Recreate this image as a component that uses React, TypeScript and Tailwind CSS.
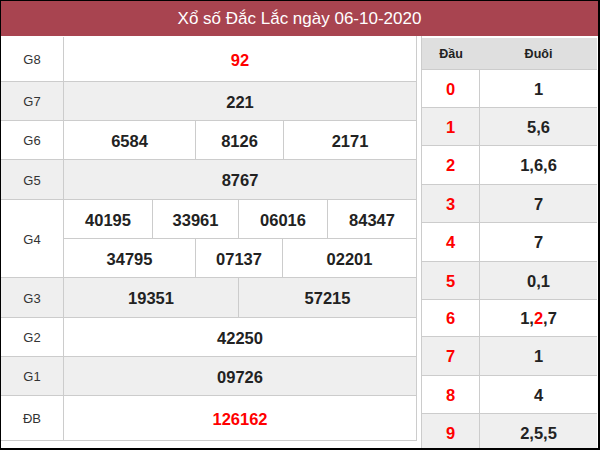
import React from "react";

const F = { fontFamily: '"Liberation Sans", Arial, sans-serif' };

function Label({ children }: { children: React.ReactNode }) {
  return (
    <div className="w-[63px] shrink-0 flex items-center justify-center pt-[2px] border-r border-[#cccccc] text-[13px] text-[#333333]">
      {children}
    </div>
  );
}

function Cell({ w, children, red, last }: { w?: string; children: React.ReactNode; red?: boolean; last?: boolean }) {
  return (
    <div
      className={`${w ?? "flex-1"} flex items-center justify-center pt-[2px] font-bold text-[16.5px] ${red ? "text-[#ff0000]" : "text-[#222222]"} ${last ? "" : "border-r border-[#cccccc]"}`}
    >
      {children}
    </div>
  );
}

export default function App() {
  const right: [string, React.ReactNode, string][] = [
    ["0", "1", "h-[38px] bg-white"],
    ["1", "5,6", "h-[38px] bg-[#efefef]"],
    ["2", "1,6,6", "h-[39px] bg-white"],
    ["3", "7", "h-[38px] bg-[#efefef]"],
    ["4", "7", "h-[39px] bg-white"],
    ["5", "0,1", "h-[38px] bg-[#efefef]"],
    [
      "6",
      <span>
        1,<span className="text-[#ff0000]">2</span>,7
      </span>,
      "h-[37px] bg-white",
    ],
    ["7", "1", "h-[39px] bg-[#efefef]"],
    ["8", "4", "h-[38px] bg-white"],
    ["9", "2,5,5", "h-[38px] bg-[#efefef]"],
  ];

  return (
    <div style={F} className="w-[600px] h-[450px] overflow-hidden bg-white border-l border-t border-r-2 border-b-2 border-black flex flex-col">
      <div className="h-[35px] shrink-0 bg-[#a84450] flex items-center justify-center text-white text-[17px]">
        Xổ số Đắc Lắc ngày 06-10-2020
      </div>
      <div className="flex flex-1 min-h-0">
        {/* Left table */}
        <div className="w-[416px] shrink-0 flex flex-col pt-[1px] border-r border-[#cccccc] self-start">
          <div className="h-[45px] flex border-b border-[#cccccc] bg-white">
            <Label>G8</Label>
            <Cell red last>92</Cell>
          </div>
          <div className="h-[39px] flex border-b border-[#cccccc] bg-[#efefef]">
            <Label>G7</Label>
            <Cell last>221</Cell>
          </div>
          <div className="h-[39px] flex border-b border-[#cccccc] bg-white">
            <Label>G6</Label>
            <Cell w="w-[132px]">6584</Cell>
            <Cell w="w-[88px]">8126</Cell>
            <Cell last>2171</Cell>
          </div>
          <div className="h-[40px] flex border-b border-[#cccccc] bg-[#efefef]">
            <Label>G5</Label>
            <Cell last>8767</Cell>
          </div>
          <div className="h-[78px] flex border-b border-[#cccccc] bg-white">
            <Label>G4</Label>
            <div className="flex-1 flex flex-col">
              <div className="h-[39px] flex border-b border-[#cccccc]">
                <Cell w="w-[89px]">40195</Cell>
                <Cell w="w-[86px]">33961</Cell>
                <Cell w="w-[89px]">06016</Cell>
                <Cell last>84347</Cell>
              </div>
              <div className="flex-1 flex">
                <Cell w="w-[132px]">34795</Cell>
                <Cell w="w-[87px]">07137</Cell>
                <Cell last>02201</Cell>
              </div>
            </div>
          </div>
          <div className="h-[40px] flex border-b border-[#cccccc] bg-[#efefef]">
            <Label>G3</Label>
            <Cell w="w-[175px]">19351</Cell>
            <Cell last>57215</Cell>
          </div>
          <div className="h-[39px] flex border-b border-[#cccccc] bg-white">
            <Label>G2</Label>
            <Cell last>42250</Cell>
          </div>
          <div className="h-[39px] flex border-b border-[#cccccc] bg-[#efefef]">
            <Label>G1</Label>
            <Cell last>09726</Cell>
          </div>
          <div className="h-[45px] flex border-b border-[#cccccc] bg-white">
            <Label>ĐB</Label>
            <Cell red last>126162</Cell>
          </div>
        </div>

        {/* Right table */}
        <div className="ml-[4px] w-[176px] shrink-0 flex flex-col pt-[2px] self-start border-l border-[#cccccc]">
          <div className="h-[32px] flex bg-[#dfdfdf] text-[12.5px] font-bold text-[#222222] border-b border-[#cccccc] pt-[1px]">
            <div className="w-[58px] flex items-center justify-center">Đầu</div>
            <div className="flex-1 flex items-center justify-center">Đuôi</div>
          </div>
          {right.map(([h, t, cls]) => (
            <div key={h} className={`${cls} flex border-b border-[#cccccc]`}>
              <div className="w-[58px] flex items-center justify-center pt-[1px] border-r border-[#cccccc] font-bold text-[16.5px] text-[#ff0000]">
                {h}
              </div>
              <div className="flex-1 flex items-center justify-center pt-[1px] font-bold text-[16.5px] text-[#222222]">{t}</div>
            </div>
          ))}
        </div>
      </div>
    </div>
  );
}
